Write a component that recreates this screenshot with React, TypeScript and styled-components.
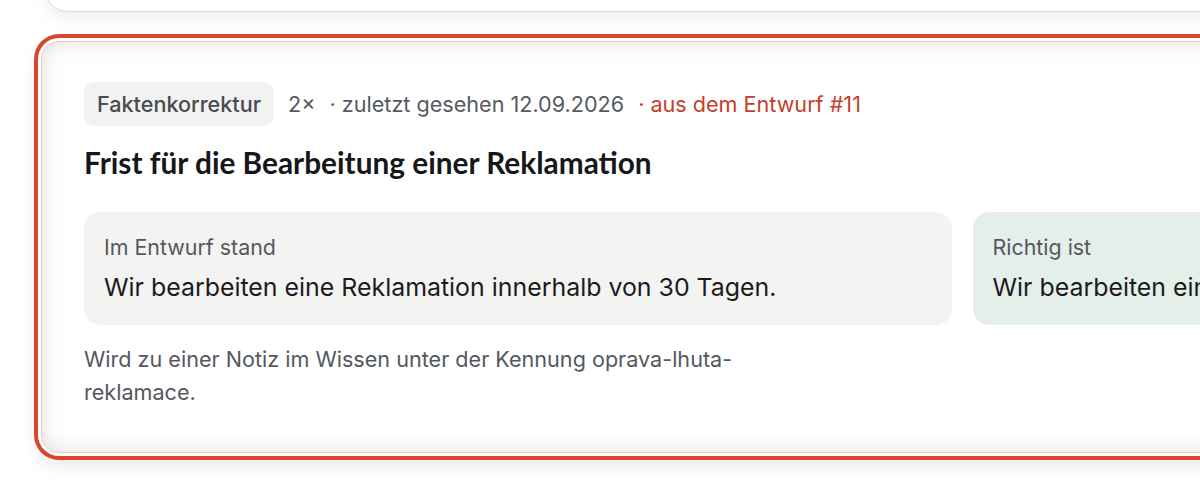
import React from "react";
import styled, { createGlobalStyle } from "styled-components";

const Global = createGlobalStyle`
  html, body { margin: 0; padding: 0; background: #ffffff; overflow: hidden; }
  body { font-family: Inter, "Noto Sans", sans-serif; -webkit-font-smoothing: antialiased; }
  * { box-sizing: border-box; }
`;

const Page = styled.div`
  width: 1200px;
  height: 491px;
  overflow: hidden;
  display: flex;
  flex-direction: column;
  gap: 29px;
  padding-left: 41px;
`;

const PrevCard = styled.div`
  width: 1900px;
  height: 80px;
  margin-top: -68px;
  margin-left: 4px;
  background: #fff;
  border: 1px solid #dcdcda;
  border-radius: 22px;
  box-shadow: 0 6px 18px rgba(0, 0, 0, 0.07);
  flex-shrink: 0;
`;

const Card = styled.section`
  width: 1842px;
  flex-shrink: 0;
  background: #fff;
  border: 1px solid #e0cdc8;
  border-radius: 18px;
  padding: 40px 42px 43px 42px;
  box-shadow:
    0 0 0 3px #ffffff,
    0 0 0 7px #d8462e,
    0 8px 22px rgba(0, 0, 0, 0.14),
    inset 0 0 20px rgba(120, 80, 70, 0.2);
  display: flex;
  flex-direction: column;
`;

const Meta = styled.div`
  display: flex;
  align-items: center;
  gap: 14px;
  font-size: 21.6px;
  line-height: 30px;
  color: #555a61;
`;

const Tag = styled.span`
  background: #f2f2f0;
  color: #484b50;
  border-radius: 10px;
  padding: 7px 13px;
  font-weight: 500;
`;

const MetaItem = styled.span<{ $accent?: boolean }>`
  color: ${(p) => (p.$accent ? "#c4402c" : "#555a61")};
`;

const Title = styled.h2`
  margin: 18px 0 0;
  font-family: Lato, "Open Sans", sans-serif;
  font-weight: 700;
  font-size: 29.8px;
  line-height: 38px;
  color: #16171a;
`;

const Compare = styled.div`
  margin-top: 30px;
  display: grid;
  grid-template-columns: 1fr 1fr;
  gap: 21px;
`;

const Box = styled.div<{ $tone: "draft" | "right" }>`
  background: ${(p) => (p.$tone === "right" ? "#e5efe9" : "#f3f3f1")};
  border-radius: 16px;
  padding: 20px 20px 21px;
  display: flex;
  flex-direction: column;
  gap: 8px;
  height: 113px;
`;

const Label = styled.div`
  font-size: 21.4px;
  line-height: 30px;
  color: #55585d;
`;

const Statement = styled.div`
  font-size: 24.9px;
  line-height: 34px;
  color: #1b1c1f;
  white-space: nowrap;
  overflow: hidden;
`;

const Footer = styled.p`
  margin: 18px 0 0;
  max-width: 700px;
  font-size: 21.6px;
  line-height: 33px;
  color: #55585d;
`;

export default function App() {
  return (
    <>
      <Global />
      <Page>
        <PrevCard />
        <Card>
          <Meta>
            <Tag>Faktenkorrektur</Tag>
            <MetaItem>2×</MetaItem>
            <MetaItem>· zuletzt gesehen 12.09.2026</MetaItem>
            <MetaItem $accent>· aus dem Entwurf #11</MetaItem>
          </Meta>
          <Title>Frist für die Bearbeitung einer Reklamation</Title>
          <Compare>
            <Box $tone="draft">
              <Label>Im Entwurf stand</Label>
              <Statement>Wir bearbeiten eine Reklamation innerhalb von 30 Tagen.</Statement>
            </Box>
            <Box $tone="right">
              <Label>Richtig ist</Label>
              <Statement>Wir bearbeiten eine Reklamation innerhalb von 14 Tagen.</Statement>
            </Box>
          </Compare>
          <Footer>Wird zu einer Notiz im Wissen unter der Kennung oprava-lhuta-reklamace.</Footer>
        </Card>
      </Page>
    </>
  );
}
